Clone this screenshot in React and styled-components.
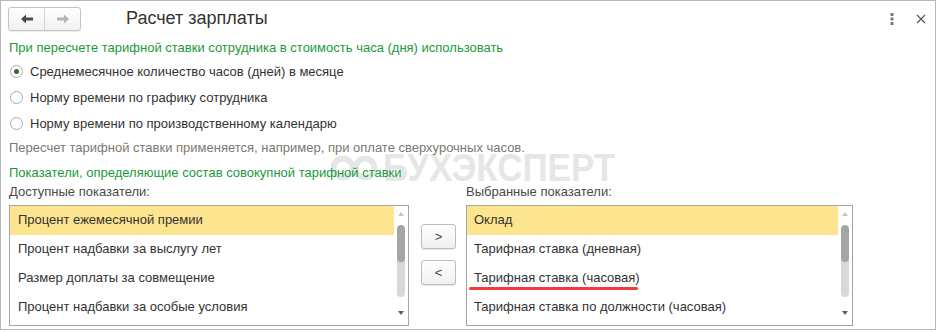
import React from 'react';
import styled, { createGlobalStyle } from 'styled-components';

const GlobalStyle = createGlobalStyle`
  html, body {
    margin: 0;
    padding: 0;
    background: #ffffff;
  }
  body {
    font-family: "Liberation Sans", Arial, sans-serif;
    font-size: 13px;
    color: #333;
  }
`;

const Window = styled.div`
  position: relative;
  box-sizing: border-box;
  width: 936px;
  height: 330px;
  border: 1px solid #b8b8b8;
  background: #fff;
  overflow: hidden;
`;

const Header = styled.div`
  display: flex;
  align-items: center;
  height: 35px;
  padding: 0 0 0 7px;
`;

const NavGroup = styled.div`
  display: flex;
  box-sizing: border-box;
  width: 73px;
  height: 24px;
  margin-top: 1px;
  border: 1px solid #c4c4c4;
  border-radius: 3px;
  background: linear-gradient(#ffffff, #f1f1f1);
  box-shadow: 0 1px 1px rgba(0, 0, 0, 0.08);
`;

const NavButton = styled.div`
  flex: 1;
  display: flex;
  align-items: center;
  justify-content: center;
  & + & {
    border-left: 1px solid #d6d6d6;
  }
`;

const Title = styled.div`
  margin-left: 45px;
  font-size: 18px;
  color: #333;
  flex: 1;
`;

const HeaderIcon = styled.div`
  width: 29px;
  display: flex;
  align-items: center;
  justify-content: center;
`;

const Content = styled.div`
  padding: 2px 0 0 8px;
  display: flex;
  flex-direction: column;
`;

const Caption = styled.div`
  height: 20px;
  line-height: 20px;
  color: ${(p) => (p.$tone === 'green' ? '#1a9a3c' : p.$tone === 'note' ? '#7d7872' : '#4a4a4a')};
  margin-top: ${(p) => p.$gap || 0}px;
`;

const RadioRow = styled.div`
  display: flex;
  align-items: center;
  height: 26px;
  color: #333;
`;

const RadioCircle = styled.span`
  box-sizing: border-box;
  width: 13px;
  height: 13px;
  margin-left: 1px;
  margin-right: 7px;
  border-radius: 50%;
  border: 1px solid #a8a8a8;
  background: #fff;
  display: flex;
  align-items: center;
  justify-content: center;
  &::after {
    content: '';
    width: 5px;
    height: 5px;
    border-radius: 50%;
    background: ${(p) => (p.$checked ? '#2f6b3a' : 'transparent')};
  }
`;

const Columns = styled.div`
  display: grid;
  grid-template-columns: 400px 57px 387px;
  grid-template-rows: 18px 121px;
  row-gap: 4px;
`;

const ListLabel = styled.div`
  line-height: 18px;
  color: #4a4a4a;
`;

const ListBox = styled.div`
  box-sizing: border-box;
  height: 121px;
  border: 1px solid #a4a4a4;
  display: flex;
`;

const Rows = styled.div`
  flex: 1;
  display: flex;
  flex-direction: column;
`;

const Row = styled.div`
  position: relative;
  height: 29px;
  line-height: 28px;
  padding-left: ${(p) => p.$indent}px;
  background: ${(p) => (p.$selected ? '#fde48f' : 'transparent')};
  color: #333;
  white-space: nowrap;
`;

const Mark = styled.span`
  position: absolute;
  left: 2px;
  top: 23px;
  width: 169px;
  height: 3px;
  border-radius: 2px;
  background: #f23a3d;
`;

const ScrollBar = styled.div`
  width: 14px;
  display: flex;
  flex-direction: column;
  align-items: center;
`;

const Arrow = styled.div`
  width: 0;
  height: 0;
  border-left: 3px solid transparent;
  border-right: 3px solid transparent;
  ${(p) =>
    p.$down
      ? 'border-top: 4px solid #5e5e5e; margin-top: 14px;'
      : 'border-bottom: 4px solid #c4c4c4; margin-top: 6px;'}
`;

const Track = styled.div`
  width: 8px;
  height: 72px;
  margin-top: 9px;
  border-radius: 4px;
  background: #d8d8d8;
  overflow: hidden;
`;

const Thumb = styled.div`
  height: 37px;
  border-radius: 4px;
  background: #a5a5a5;
`;

const Mover = styled.div`
  display: flex;
  flex-direction: column;
  align-items: center;
  padding: 19px 0 0 2px;
  gap: 11px;
`;

const MoveButton = styled.div`
  box-sizing: border-box;
  width: 35px;
  height: 25px;
  border: 1px solid #bdbdbd;
  border-radius: 3px;
  background: linear-gradient(#ffffff, #f0f0f0);
  box-shadow: 0 1px 1px rgba(0, 0, 0, 0.1);
  display: flex;
  align-items: center;
  justify-content: center;
  color: #444;
  font-size: 13px;
`;

const Watermark = styled.div`
  position: absolute;
  left: 330px;
  top: 147px;
  display: flex;
  align-items: center;
  gap: 6px;
  color: #e6e6e6;
  pointer-events: none;
  z-index: 0;
`;

const WatermarkText = styled.span`
  display: inline-block;
  font-family: "Liberation Sans", Arial, sans-serif;
  font-weight: bold;
  font-size: 38px;
  line-height: 40px;
  transform: scaleX(0.92);
  transform-origin: left center;
`;

const Front = styled.div`
  position: relative;
  z-index: 1;
`;

const ArrowIcon = ({ dir, color }) => (
  <svg width="14" height="10" viewBox="0 0 14 10">
    <g transform={dir === 'right' ? 'translate(14 0) scale(-1 1)' : undefined}>
      <path d="M1 5 L6 0.5 L6 3.5 L13 3.5 L13 6.5 L6 6.5 L6 9.5 Z" fill={color} />
    </g>
  </svg>
);

const ScrollPane = () => (
  <ScrollBar>
    <Arrow />
    <Track>
      <Thumb />
    </Track>
    <Arrow $down />
  </ScrollBar>
);

const available = [
  'Процент ежемесячной премии',
  'Процент надбавки за выслугу лет',
  'Размер доплаты за совмещение',
  'Процент надбавки за особые условия',
];

const chosen = [
  'Оклад',
  'Тарифная ставка (дневная)',
  'Тарифная ставка (часовая)',
  'Тарифная ставка по должности (часовая)',
];

const radios = [
  'Среднемесячное количество часов (дней) в месяце',
  'Норму времени по графику сотрудника',
  'Норму времени по производственному календарю',
];

const App = () => (
  <>
    <GlobalStyle />
    <Window>
      <Header>
        <NavGroup>
          <NavButton>
            <ArrowIcon dir="left" color="#4a4a4a" />
          </NavButton>
          <NavButton>
            <ArrowIcon dir="right" color="#b4b4b4" />
          </NavButton>
        </NavGroup>
        <Title>Расчет зарплаты</Title>
        <HeaderIcon>
          <svg width="4" height="12" viewBox="0 0 4 12">
            <rect x="0.5" y="0" width="3" height="3" fill="#7a7a7a" />
            <rect x="0.5" y="4.5" width="3" height="3" fill="#7a7a7a" />
            <rect x="0.5" y="9" width="3" height="3" fill="#7a7a7a" />
          </svg>
        </HeaderIcon>
        <HeaderIcon>
          <svg width="10" height="10" viewBox="0 0 10 10">
            <path d="M1 1 L9 9 M9 1 L1 9" stroke="#555" strokeWidth="1.1" />
          </svg>
        </HeaderIcon>
      </Header>

      <Watermark>
        <svg width="46" height="30" viewBox="0 0 46 30">
          <circle cx="12" cy="15" r="9.5" fill="none" stroke="#e6e6e6" strokeWidth="6" />
          <circle cx="34" cy="15" r="9.5" fill="none" stroke="#e6e6e6" strokeWidth="6" />
        </svg>
        <WatermarkText>БУХЭКСПЕРТ</WatermarkText>
      </Watermark>

      <Front>
        <Content>
          <Caption $tone="green">
            При пересчете тарифной ставки сотрудника в стоимость часа (дня) использовать
          </Caption>
          {radios.map((r, i) => (
            <RadioRow key={r}>
              <RadioCircle $checked={i === 0} />
              {r}
            </RadioRow>
          ))}
          <Caption $tone="note" $gap={2}>
            Пересчет тарифной ставки применяется, например, при оплате сверхурочных часов.
          </Caption>
          <Caption $tone="green" $gap={5}>
            Показатели, определяющие состав совокупной тарифной ставки
          </Caption>
          <Columns>
            <ListLabel>Доступные показатели:</ListLabel>
            <div />
            <ListLabel>Выбранные показатели:</ListLabel>
            <ListBox>
              <Rows>
                {available.map((t, i) => (
                  <Row key={t} $indent={8} $selected={i === 0}>
                    {t}
                  </Row>
                ))}
              </Rows>
              <ScrollPane />
            </ListBox>
            <Mover>
              <MoveButton>&gt;</MoveButton>
              <MoveButton>&lt;</MoveButton>
            </Mover>
            <ListBox>
              <Rows>
                {chosen.map((t, i) => (
                  <Row key={t} $indent={7} $selected={i === 0}>
                    {t}
                    {i === 2 && <Mark />}
                  </Row>
                ))}
              </Rows>
              <ScrollPane />
            </ListBox>
          </Columns>
        </Content>
      </Front>
    </Window>
  </>
);

export default App;
